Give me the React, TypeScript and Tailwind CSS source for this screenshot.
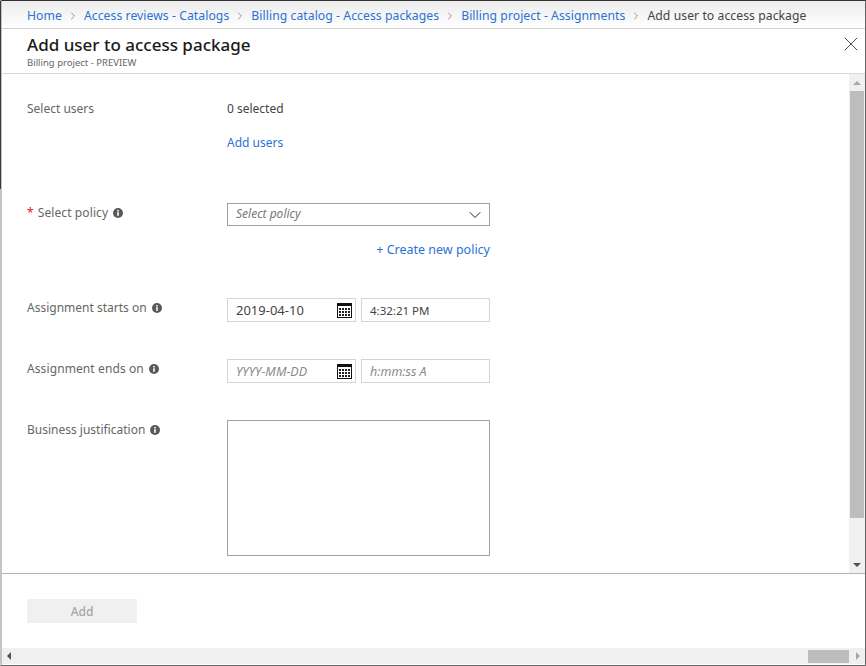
import { ChevronRight, ChevronDown, X } from "lucide-react";

const crumbs = [
  "Home",
  "Access reviews - Catalogs",
  "Billing catalog - Access packages",
  "Billing project - Assignments",
];

const Info = () => (
  <svg viewBox="0 0 10 10" className="ml-[5px] h-[10px] w-[10px] shrink-0">
    <circle cx="5" cy="5" r="5" fill="#59595b" />
    <rect x="4.2" y="4.2" width="1.6" height="3.6" fill="#fff" />
    <rect x="4.2" y="2" width="1.6" height="1.5" fill="#fff" />
  </svg>
);

const Calendar = () => (
  <svg viewBox="0 0 15 15" className="h-[15px] w-[15px]">
    <rect x="0" y="0" width="15" height="15" fill="#111" />
    <rect x="1" y="3" width="13" height="11" fill="#fff" />
    {[4, 7, 10].map((y) =>
      [2, 5, 8, 11].map((x) => (
        <rect key={`${x}-${y}`} x={x} y={y + 1} width="2" height="2" fill="#222" />
      ))
    )}
  </svg>
);

const Label = ({ text, info, required, wide }: { text: string; info?: boolean; required?: boolean; wide?: boolean }) => (
  <div className={`flex h-5 w-[200px] shrink-0 items-center text-[#666] ${wide ? "tracking-[0.1px]" : ""}`}>
    {required && <span className="mr-[4px] text-[#e81123]">*</span>}
    <span>{text}</span>
    {info && <Info />}
  </div>
);

const DateInputs = ({ date, time, empty }: { date: string; time: string; empty?: boolean }) => {
  const dateTone = empty ? "pt-[1px] italic text-[#8a8a8a] text-[12.5px]" : "text-[#444] text-[13px]";
  const timeTone = empty ? "pt-[1px] italic text-[#8a8a8a] text-[12.5px]" : "pt-[1px] text-[#444] text-[11.5px]";
  return (
    <div className="flex gap-[5px]">
      <div className="flex h-6 w-[129px] items-center justify-between border border-[#d4d4d4] pl-2 pr-[3px]">
        <span className={dateTone}>{date}</span>
        <Calendar />
      </div>
      <div className="flex h-6 w-[129px] items-center border border-[#d4d4d4] pl-2">
        <span className={timeTone}>{time}</span>
      </div>
    </div>
  );
};

export default function App() {
  return (
    <div
      className="relative flex h-[666px] w-[866px] flex-col border-t border-r border-b border-l-2 border-t-[#333] border-r-[#666] border-b-[#666] border-l-[#c4c4c4] bg-white text-[12px] leading-5"
      style={{ fontFamily: '"Noto Sans", sans-serif' }}
    >
      {/* dark edge of the page behind the blade */}
      <div className="absolute -left-[2px] top-0 h-[188px] w-[1px] bg-[#3a3a3a]" />

      <nav className="flex h-[28px] shrink-0 items-center border-b border-[#d0d0d0] bg-gradient-to-b from-[#ececec] to-white pl-[25px] pt-[2px] text-[12.2px] tracking-[0.06px]">
        {crumbs.map((name) => (
          <div key={name} className="flex items-center">
            <span className="text-[#2a72d4]">{name}</span>
            <ChevronRight strokeWidth={1.5} className="mx-[5px] h-3 w-3 text-[#777]" />
          </div>
        ))}
        <span className="text-[#444]">Add user to access package</span>
      </nav>

      <header className="flex h-[45px] shrink-0 items-start justify-between border-b border-[#d8d8d8] pl-[25px] pr-[2px]">
        <div className="pt-[5px]">
          <h1 className="text-[17px] leading-[22px] font-medium text-[#1a1a1a]">Add user to access package</h1>
          <p className="pt-[1px] text-[9.5px] leading-[11px] text-[#666]">Billing project - PREVIEW</p>
        </div>
        <X strokeWidth={0.8} className="mt-[3px] h-6 w-6 text-[#222]" />
      </header>

      <div className="flex min-h-0 flex-1">
        <main className="flex-1 pl-[25px] pt-6">
          <div className="flex pt-[1px]">
            <Label text="Select users" />
            <div>
              <div className="text-[#444]">0 selected</div>
              <div className="mt-[14px] text-[#2a72d4]">Add users</div>
            </div>
          </div>

          <div className="mt-[50px] flex">
            <Label text="Select policy" info required wide />
            <div className="w-[263px]">
              <div className="flex h-[23px] items-center justify-between border border-[#a0a0a0] pb-[2px] pl-2 pr-[4px] text-[12px] italic text-[#777]">
                <span>Select policy</span>
                <ChevronDown strokeWidth={1.2} className="mt-[2px] h-[20px] w-[20px] text-[#222]" />
              </div>
              <div className="mt-[14px] text-right text-[12.5px] text-[#2a72d4]">+ Create new policy</div>
            </div>
          </div>

          <div className="mt-[38px] flex">
            <Label text="Assignment starts on" info />
            <DateInputs date="2019-04-10" time="4:32:21 PM" />
          </div>

          <div className="mt-[37px] flex">
            <Label text="Assignment ends on" info wide />
            <DateInputs date="YYYY-MM-DD" time="h:mm:ss A" empty />
          </div>

          <div className="mt-[37px] flex">
            <Label text="Business justification" info />
            <div className="h-[136px] w-[263px] border border-[#a0a0a0]" />
          </div>
        </main>

        <aside className="flex w-4 shrink-0 flex-col items-center bg-[#f0f0f0]">
          <div className="flex h-[17px] items-center justify-center">
            <div className="h-0 w-0 border-x-[4px] border-b-[4px] border-x-transparent border-b-[#a6a6a6]" />
          </div>
          <div className="h-[427px] w-[14px] bg-[#bdbdbd]" />
          <div className="flex flex-1 items-end justify-center pb-[6px]">
            <div className="h-0 w-0 border-x-[4px] border-t-[4px] border-x-transparent border-t-[#505050]" />
          </div>
        </aside>
      </div>

      <footer className="h-[75px] shrink-0 border-t border-[#b4b4b4] pl-[25px] pt-[25px]">
        <div className="flex h-6 w-[110px] items-center justify-center bg-[#f0f0f0] pt-[1px] font-medium text-[#a6a6a6]">Add</div>
      </footer>

      <div className="mb-[1px] flex h-[16px] shrink-0 items-center justify-between bg-[#f0f0f0]">
        <div className="ml-[5px] h-0 w-0 border-y-[4px] border-r-[4px] border-y-transparent border-r-[#505050]" />
        <div className="flex items-center">
          <div className="h-[13px] w-[41px] bg-[#bdbdbd]" />
          <div className="ml-[7px] mr-[5px] h-0 w-0 border-y-[4px] border-l-[4px] border-y-transparent border-l-[#a6a6a6]" />
        </div>
      </div>
    </div>
  );
}
